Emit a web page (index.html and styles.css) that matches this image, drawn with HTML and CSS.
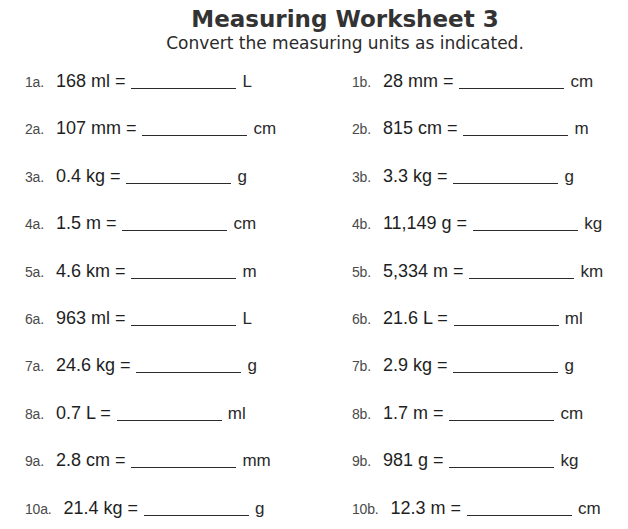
FILE: index.html
```html
<!DOCTYPE html>
<html lang="en">
<head>
<meta charset="utf-8">
<title>Measuring Worksheet 3</title>
<link rel="stylesheet" href="styles.css">
</head>
<body>
<div class="sheet">
  <header class="head">
    <h1 class="title">Measuring Worksheet 3</h1>
    <p class="subtitle">Convert the measuring units as indicated.</p>
  </header>
  <div class="problems">
    <div class="row"><span class="num">1a.</span><span class="expr">168 ml =</span><span class="blank"></span><span class="unit">L</span></div>
    <div class="row"><span class="num">1b.</span><span class="expr">28 mm =</span><span class="blank"></span><span class="unit">cm</span></div>
    <div class="row"><span class="num">2a.</span><span class="expr">107 mm =</span><span class="blank"></span><span class="unit">cm</span></div>
    <div class="row"><span class="num">2b.</span><span class="expr">815 cm =</span><span class="blank"></span><span class="unit">m</span></div>
    <div class="row"><span class="num">3a.</span><span class="expr">0.4 kg =</span><span class="blank"></span><span class="unit">g</span></div>
    <div class="row"><span class="num">3b.</span><span class="expr">3.3 kg =</span><span class="blank"></span><span class="unit">g</span></div>
    <div class="row"><span class="num">4a.</span><span class="expr">1.5 m =</span><span class="blank"></span><span class="unit">cm</span></div>
    <div class="row"><span class="num">4b.</span><span class="expr">11,149 g =</span><span class="blank"></span><span class="unit">kg</span></div>
    <div class="row"><span class="num">5a.</span><span class="expr">4.6 km =</span><span class="blank"></span><span class="unit">m</span></div>
    <div class="row"><span class="num">5b.</span><span class="expr">5,334 m =</span><span class="blank"></span><span class="unit">km</span></div>
    <div class="row"><span class="num">6a.</span><span class="expr">963 ml =</span><span class="blank"></span><span class="unit">L</span></div>
    <div class="row"><span class="num">6b.</span><span class="expr">21.6 L =</span><span class="blank"></span><span class="unit">ml</span></div>
    <div class="row"><span class="num">7a.</span><span class="expr">24.6 kg =</span><span class="blank"></span><span class="unit">g</span></div>
    <div class="row"><span class="num">7b.</span><span class="expr">2.9 kg =</span><span class="blank"></span><span class="unit">g</span></div>
    <div class="row"><span class="num">8a.</span><span class="expr">0.7 L =</span><span class="blank"></span><span class="unit">ml</span></div>
    <div class="row"><span class="num">8b.</span><span class="expr">1.7 m =</span><span class="blank"></span><span class="unit">cm</span></div>
    <div class="row"><span class="num">9a.</span><span class="expr">2.8 cm =</span><span class="blank"></span><span class="unit">mm</span></div>
    <div class="row"><span class="num">9b.</span><span class="expr">981 g =</span><span class="blank"></span><span class="unit">kg</span></div>
    <div class="row"><span class="num">10a.</span><span class="expr">21.4 kg =</span><span class="blank"></span><span class="unit">g</span></div>
    <div class="row"><span class="num">10b.</span><span class="expr">12.3 m =</span><span class="blank"></span><span class="unit">cm</span></div>
  </div>
</div>
</body>
</html>
```

FILE: styles.css
```css
html, body {
  margin: 0;
  padding: 0;
  background: #ffffff;
}

.sheet {
  width: 628px;
  height: 529px;
  overflow: hidden;
  font-family: "Liberation Sans", Arial, sans-serif;
  color: #1c1c1c;
}

.head {
  padding: 7px 0 0 62px;
  text-align: center;
}

.title {
  margin: 0;
  font-family: "DejaVu Sans", Verdana, sans-serif;
  font-weight: bold;
  font-size: 23px;
  line-height: 24px;
  color: #333333;
}

.subtitle {
  margin: 3px 0 0 0;
  font-family: "DejaVu Sans", Verdana, sans-serif;
  font-size: 17px;
  line-height: 18px;
  color: #2a2a2a;
}

.problems {
  margin-top: 6px;
  padding-left: 25px;
  display: grid;
  grid-template-columns: 327px 1fr;
  grid-auto-rows: 47.4px;
}

.row {
  white-space: nowrap;
  line-height: 47.4px;
  height: 47.4px;
}

.num {
  display: inline-block;
  font-family: "Liberation Sans", Arial, sans-serif;
  font-size: 14px;
  letter-spacing: -0.2px;
  color: #4a4a4a;
  margin-right: 12px;
}

.expr {
  font-size: 18px;
  color: #1e1e1e;
}

.blank {
  display: inline-block;
  width: 105px;
  height: 0;
  border-bottom: 1.5px solid #2b2b2b;
  margin: 0 6px -2px 6px;
}

.unit {
  font-size: 17px;
  color: #2a2a2a;
}
```
